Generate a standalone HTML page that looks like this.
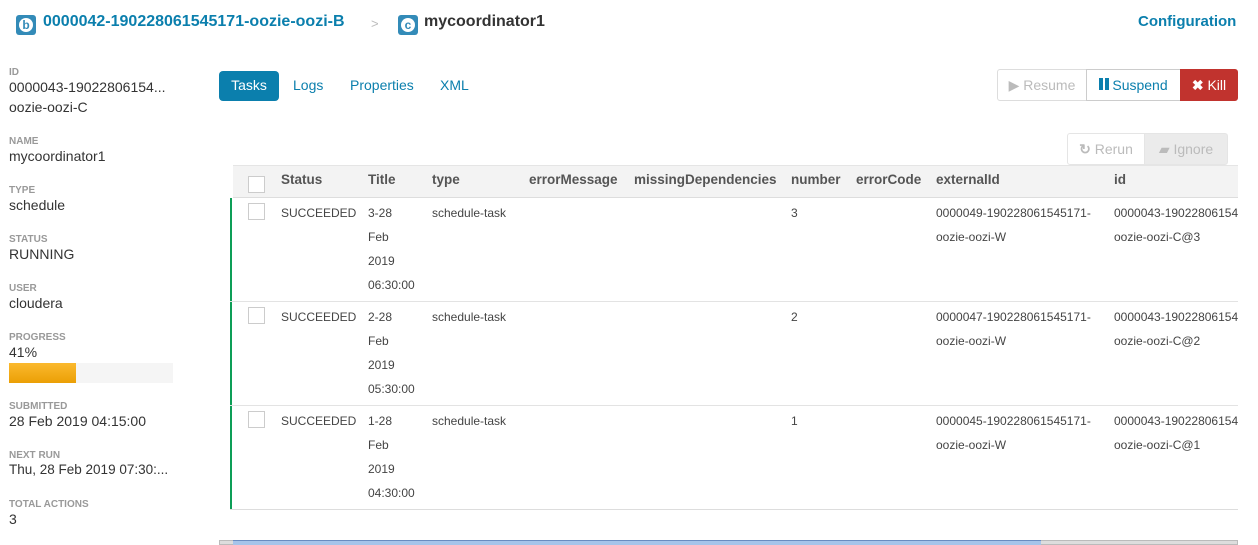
<!DOCTYPE html>
<html><head><style>
*{margin:0;padding:0;box-sizing:border-box}
body{width:1258px;height:545px;overflow:hidden;background:#fff;font-family:"Liberation Sans",sans-serif;color:#333;position:relative}
.a{position:absolute;white-space:nowrap}
.lbl{font-size:10px;color:#999;font-weight:bold}
.val{font-size:14px;color:#333}
.ic{position:absolute;width:20px;height:20px;border-radius:3px;background:#338bb8}
.ic:after{content:"";position:absolute;left:3px;top:3px;width:14px;height:14px;border-radius:50%;background:#fff}
.ic span{position:absolute;left:0;width:20px;top:2px;text-align:center;font-size:12px;font-weight:bold;color:#338bb8;z-index:2;line-height:16px}
.th{font-size:13.5px;font-weight:bold;color:#555;top:172px}
.td{font-size:12px;color:#444;line-height:24px}
.cb{position:absolute;width:17px;height:17px;border:1px solid #ccc;background:#fff}
.btn{position:absolute;height:32px;font-size:14px;line-height:30px;text-align:center;border:1px solid #ddd}
</style></head><body>
<div class="ic" style="left:16px;top:15px"><span>b</span></div>
<div class="a" style="left:43px;top:13px;font-size:16px;font-weight:bold;color:#0b7fad">0000042-190228061545171-oozie-oozi-B</div>
<div class="a" style="left:371px;top:16px;font-size:13px;color:#bbb">&gt;</div>
<div class="ic" style="left:398px;top:15px"><span>c</span></div>
<div class="a" style="left:424px;top:13px;font-size:16px;font-weight:bold;color:#333">mycoordinator1</div>
<div class="a" style="left:1138px;top:13px;font-size:15px;font-weight:bold;color:#0b7fad">Configuration</div>

<div class="a lbl" style="left:9px;top:67px">ID</div>
<div class="a val" style="left:9px;top:79px">0000043-19022806154...</div>
<div class="a val" style="left:9px;top:99px">oozie-oozi-C</div>
<div class="a lbl" style="left:9px;top:136px">NAME</div>
<div class="a val" style="left:9px;top:148px">mycoordinator1</div>
<div class="a lbl" style="left:9px;top:185px">TYPE</div>
<div class="a val" style="left:9px;top:197px">schedule</div>
<div class="a lbl" style="left:9px;top:234px">STATUS</div>
<div class="a val" style="left:9px;top:246px">RUNNING</div>
<div class="a lbl" style="left:9px;top:283px">USER</div>
<div class="a val" style="left:9px;top:295px">cloudera</div>
<div class="a lbl" style="left:9px;top:332px">PROGRESS</div>
<div class="a val" style="left:9px;top:344px">41%</div>
<div class="a" style="left:9px;top:363px;width:164px;height:20px;background:#f5f5f5"><div style="width:67px;height:20px;background:linear-gradient(#fbb92e,#eb9f05)"></div></div>
<div class="a lbl" style="left:9px;top:401px">SUBMITTED</div>
<div class="a val" style="left:9px;top:413px">28 Feb 2019 04:15:00</div>
<div class="a lbl" style="left:9px;top:450px">NEXT RUN</div>
<div class="a val" style="left:9px;top:462px;font-size:13.5px">Thu, 28 Feb 2019 07:30:...</div>
<div class="a lbl" style="left:9px;top:499px">TOTAL ACTIONS</div>
<div class="a val" style="left:9px;top:511px">3</div>

<div class="a" style="left:219px;top:71px;width:60px;height:30px;border-radius:4px;background:#0b7fad;color:#fff;font-size:14px;line-height:29px;text-align:center">Tasks</div>
<div class="a" style="left:293px;top:77px;font-size:14px;color:#0b7fad">Logs</div>
<div class="a" style="left:350px;top:77px;font-size:14px;color:#0b7fad">Properties</div>
<div class="a" style="left:440px;top:77px;font-size:14px;color:#0b7fad">XML</div>

<div class="btn" style="left:997px;top:69px;width:90px;color:#bbb;border-radius:3px 0 0 3px">▶ Resume</div>
<div class="btn" style="left:1086px;top:69px;width:95px;color:#0b7fad;border-color:#ccc"><span style="display:inline-block;width:4px;height:12px;background:#0b7fad;margin-right:2px"></span><span style="display:inline-block;width:4px;height:12px;background:#0b7fad;margin-right:3px"></span>Suspend</div>
<div class="btn" style="left:1180px;top:69px;width:58px;background:#c1332e;border-color:#c1332e;color:#fff;border-radius:0 3px 3px 0"><b>✖</b> Kill</div>
<div class="btn" style="left:1067px;top:133px;width:78px;color:#bbb;border-color:#e5e5e5;border-radius:3px 0 0 3px"><b>↻</b> Rerun</div>
<div class="btn" style="left:1144px;top:133px;width:84px;color:#bbb;background:#ebebeb;border-color:#e5e5e5;border-radius:0 3px 3px 0">▰ Ignore</div>

<div class="a" style="left:230px;top:164px;width:1008px;height:346px;overflow:hidden">
 <div class="a" style="left:3px;top:1px;width:1005px;height:33px;background:#f3f3f3;border-top:1px solid #e5e5e5;border-bottom:1px solid #ddd"></div>
 <div class="a" style="left:0;top:34px;width:2px;height:312px;background:#0d9e57"></div>
 <div class="a" style="left:0;top:137px;width:1008px;height:1px;background:#e3e3e3"></div>
 <div class="a" style="left:0;top:241px;width:1008px;height:1px;background:#e3e3e3"></div>
 <div class="a" style="left:0;top:345px;width:1008px;height:1px;background:#ddd"></div>
</div>
<div class="cb" style="left:248px;top:176px"></div>
<div class="a th" style="left:281px">Status</div>
<div class="a th" style="left:368px">Title</div>
<div class="a th" style="left:432px">type</div>
<div class="a th" style="left:529px">errorMessage</div>
<div class="a th" style="left:634px">missingDependencies</div>
<div class="a th" style="left:791px">number</div>
<div class="a th" style="left:856px">errorCode</div>
<div class="a th" style="left:936px">externalId</div>
<div class="a th" style="left:1114px">id</div>

<div class="cb" style="left:248px;top:203px"></div>
<div class="a td" style="left:281px;top:201px">SUCCEEDED</div>
<div class="a td" style="left:368px;top:201px">3-28<br>Feb<br>2019<br>06:30:00</div>
<div class="a td" style="left:432px;top:201px">schedule-task</div>
<div class="a td" style="left:791px;top:201px">3</div>
<div class="a td" style="left:936px;top:201px">0000049-190228061545171-<br>oozie-oozi-W</div>
<div class="a td" style="left:1114px;top:201px;width:124px;overflow:hidden">0000043-190228061545171-<br>oozie-oozi-C@3</div>

<div class="cb" style="left:248px;top:307px"></div>
<div class="a td" style="left:281px;top:305px">SUCCEEDED</div>
<div class="a td" style="left:368px;top:305px">2-28<br>Feb<br>2019<br>05:30:00</div>
<div class="a td" style="left:432px;top:305px">schedule-task</div>
<div class="a td" style="left:791px;top:305px">2</div>
<div class="a td" style="left:936px;top:305px">0000047-190228061545171-<br>oozie-oozi-W</div>
<div class="a td" style="left:1114px;top:305px;width:124px;overflow:hidden">0000043-190228061545171-<br>oozie-oozi-C@2</div>

<div class="cb" style="left:248px;top:411px"></div>
<div class="a td" style="left:281px;top:409px">SUCCEEDED</div>
<div class="a td" style="left:368px;top:409px">1-28<br>Feb<br>2019<br>04:30:00</div>
<div class="a td" style="left:432px;top:409px">schedule-task</div>
<div class="a td" style="left:791px;top:409px">1</div>
<div class="a td" style="left:936px;top:409px">0000045-190228061545171-<br>oozie-oozi-W</div>
<div class="a td" style="left:1114px;top:409px;width:124px;overflow:hidden">0000043-190228061545171-<br>oozie-oozi-C@1</div>

<div class="a" style="left:219px;top:540px;width:1019px;height:5px;background:#ddd;border:1px solid #bbb"></div>
<div class="a" style="left:233px;top:540px;width:808px;height:5px;background:#a6c4ea;border-top:1px solid #6a8cc0"></div>
</body></html>
